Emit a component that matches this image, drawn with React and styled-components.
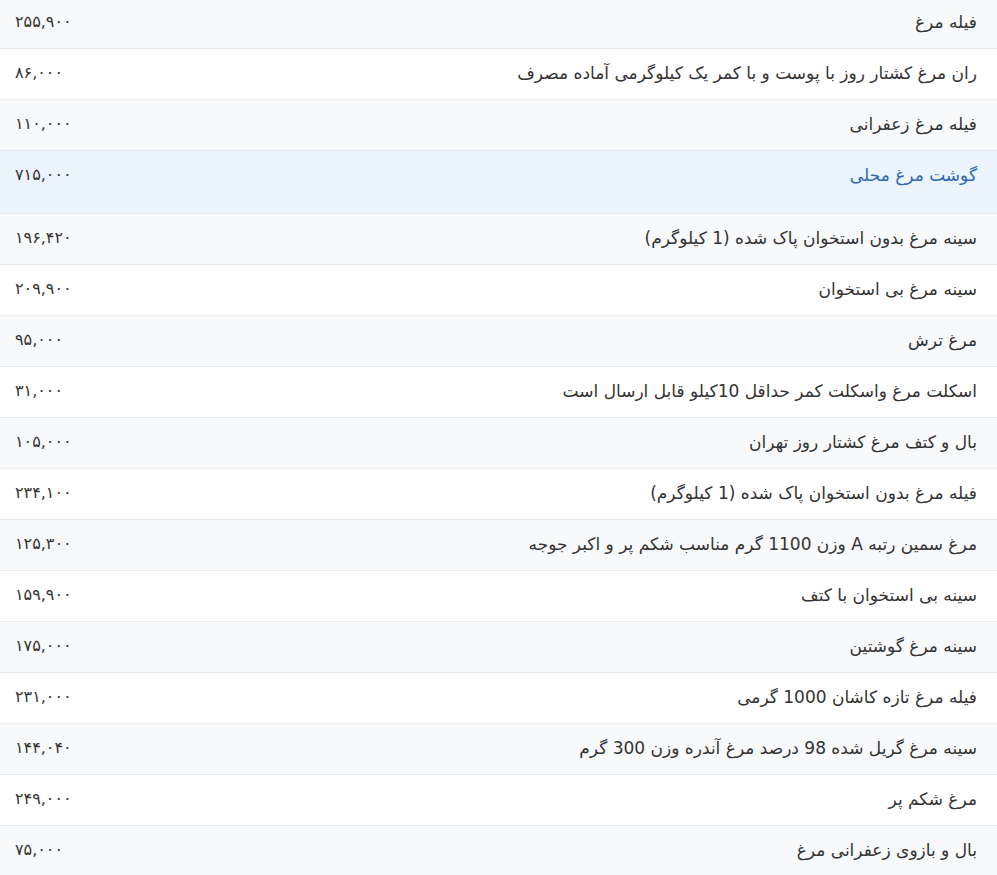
import React from "react"
import styled, { createGlobalStyle } from "styled-components"

const GlobalStyle = createGlobalStyle`
  html, body {
    margin: 0;
    padding: 0;
    background: #ffffff;
  }
  body {
    font-family: "DejaVu Sans", "Noto Sans", sans-serif;
    color: #333333;
  }
`

const PriceList = styled.div`
  direction: rtl;
  width: 100%;
  margin-top: -2px;
`

const Row = styled.div`
  display: flex;
  justify-content: space-between;
  align-items: flex-start;
  padding: 12px 20px ${(p) => (p.$active ? "26px" : "14px")} 15px;
  border-bottom: 1px solid #e7e9ec;
  background: ${(p) => (p.$active ? "#ebf3fc" : p.$striped ? "#f8f9fb" : "#ffffff")};
  font-size: 17px;
  line-height: 24px;
`

const Name = styled.span`
  color: ${(p) => (p.$active ? "#2a6ab0" : "#333333")};
`

const Price = styled.span`
  direction: ltr;
  font-size: 16px;
  color: #333333;
`

const items = [
  ["فیله مرغ", "۲۵۵,۹۰۰"],
  ["ران مرغ کشتار روز با پوست و با کمر یک کیلوگرمی آماده مصرف", "۸۶,۰۰۰"],
  ["فیله مرغ زعفرانی", "۱۱۰,۰۰۰"],
  ["گوشت مرغ محلی", "۷۱۵,۰۰۰", true],
  ["سینه مرغ بدون استخوان پاک شده (1 کیلوگرم)", "۱۹۶,۴۲۰"],
  ["سینه مرغ بی استخوان", "۲۰۹,۹۰۰"],
  ["مرغ ترش", "۹۵,۰۰۰"],
  ["اسکلت مرغ واسکلت کمر حداقل 10کیلو قابل ارسال است", "۳۱,۰۰۰"],
  ["بال و کتف مرغ کشتار روز تهران", "۱۰۵,۰۰۰"],
  ["فیله مرغ بدون استخوان پاک شده (1 کیلوگرم)", "۲۳۴,۱۰۰"],
  ["مرغ سمین رتبه A وزن 1100 گرم مناسب شکم پر و اکبر جوجه", "۱۲۵,۳۰۰"],
  ["سینه بی استخوان با کتف", "۱۵۹,۹۰۰"],
  ["سینه مرغ گوشتین", "۱۷۵,۰۰۰"],
  ["فیله مرغ تازه کاشان 1000 گرمی", "۲۳۱,۰۰۰"],
  ["سینه مرغ گریل شده 98 درصد مرغ آندره وزن 300 گرم", "۱۴۴,۰۴۰"],
  ["مرغ شکم پر", "۲۴۹,۰۰۰"],
  ["بال و بازوی زعفرانی مرغ", "۷۵,۰۰۰"],
]

export default function App() {
  return (
    <>
      <GlobalStyle />
      <PriceList>
        {items.map(([name, price, active], i) => (
          <Row key={name} $striped={i % 2 === 0} $active={active}>
            <Name $active={active}>{name}</Name>
            <Price>{price}</Price>
          </Row>
        ))}
      </PriceList>
    </>
  )
}
